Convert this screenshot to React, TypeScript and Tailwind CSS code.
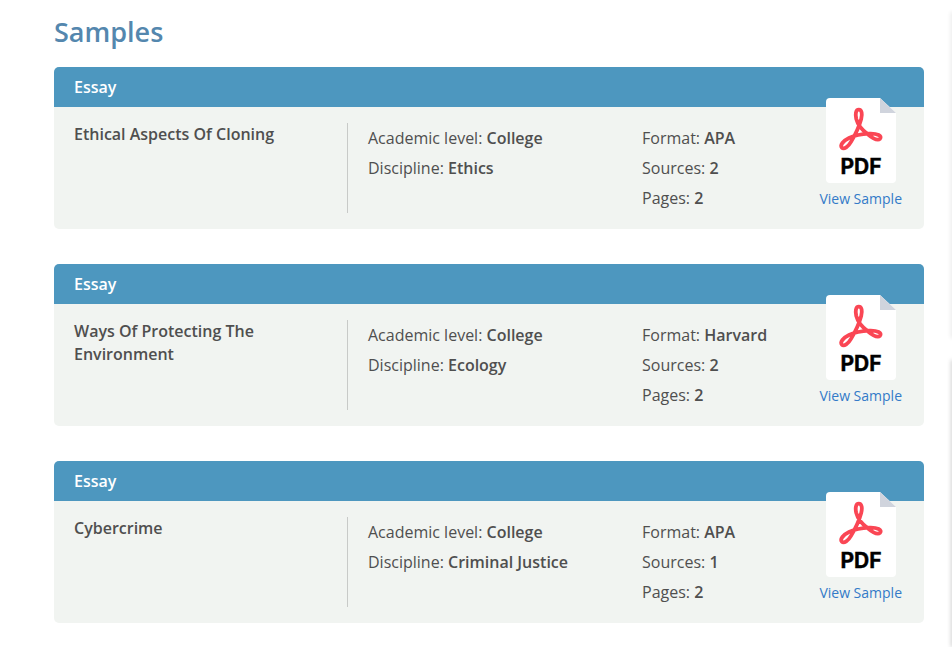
type Sample = {
  title: string
  level: string
  discipline: string
  format: string
  sources: number
  pages: number
}

const SAMPLES: Sample[] = [
  {
    title: 'Ethical Aspects Of Cloning',
    level: 'College',
    discipline: 'Ethics',
    format: 'APA',
    sources: 2,
    pages: 2,
  },
  {
    title: 'Ways Of Protecting The Environment',
    level: 'College',
    discipline: 'Ecology',
    format: 'Harvard',
    sources: 2,
    pages: 2,
  },
  {
    title: 'Cybercrime',
    level: 'College',
    discipline: 'Criminal Justice',
    format: 'APA',
    sources: 1,
    pages: 2,
  },
]

function PdfIcon() {
  return (
    <svg viewBox="0 0 70 85" className="h-[85px] w-[70px]" aria-hidden="true">
      <path d="M4 0H54L70 15V81Q70 85 66 85H4Q0 85 0 81V4Q0 0 4 0Z" fill="#fff" />
      <path d="M54 0L70 15H54Z" fill="#d0d4dd" />
      <path
        d="M32.8 11.6C29.6 11.6 29.2 16.4 30.2 20.7C31.8 26.9 36.2 31.9 41.2 35.7C46.2 40 51.5 43 54 40.9C56.5 37.9 51.5 35.2 43 35.6C36 35.9 28.5 37.4 23 40C17 42.9 13.8 47.2 15.8 49.6C18 51.8 22.3 48.7 25 43.9C28.5 37.9 33.2 28.4 35.2 20.9C36.5 15.9 35.8 11.6 32.8 11.6Z"
        fill="none"
        stroke="#fa4654"
        strokeWidth="3.8"
        strokeLinejoin="round"
      />
      <text
        x="35"
        y="76"
        textAnchor="middle"
        fill="#000"
        stroke="#000"
        strokeWidth="0.4"
        className="font-['Inter',sans-serif] text-[21px] font-bold"
      >
        PDF
      </text>
    </svg>
  )
}

function Field({ label, value }: { label: string; value: string | number }) {
  return (
    <div>
      <dt className="inline">{label}: </dt>
      <dd className="inline font-semibold">{value}</dd>
    </div>
  )
}

function SampleCard({ sample }: { sample: Sample }) {
  return (
    <article className="rounded-[5px] bg-[#f1f4f1]">
      <header className="rounded-t-[5px] bg-[#4d97bf] px-5 py-2 font-semibold leading-6 text-white">
        Essay
      </header>
      <div className="relative flex py-4">
        <h2 className="w-[294px] shrink-0 border-r border-[#c8cac8] pr-16 pl-5 font-semibold leading-[23px]">
          {sample.title}
        </h2>
        <dl className="w-[274px] shrink-0 pl-5 leading-[30px]">
          <Field label="Academic level" value={sample.level} />
          <Field label="Discipline" value={sample.discipline} />
        </dl>
        <dl className="min-w-0 flex-1 pl-5 leading-[30px]">
          <Field label="Format" value={sample.format} />
          <Field label="Sources" value={sample.sources} />
          <Field label="Pages" value={sample.pages} />
        </dl>
        <a
          href="#sample"
          className="absolute -top-[9px] right-[22px] flex flex-col items-center gap-1 text-sm leading-6 text-[#337ac8]"
        >
          <PdfIcon />
          View Sample
        </a>
      </div>
    </article>
  )
}

export default function App() {
  return (
    <div className="flex overflow-hidden bg-white font-['Open_Sans',sans-serif] text-base text-[#4f4f4f]">
      <main className="min-w-0 flex-1 pt-3 pr-7 pb-6 pl-[54px]">
        <h1 className="text-[27px] font-semibold leading-10 text-[#5487ae]">Samples</h1>
        <div className="mt-[15px] flex flex-col gap-[35px]">
          {SAMPLES.map((sample) => (
            <SampleCard key={sample.title} sample={sample} />
          ))}
        </div>
      </main>
      <aside className="-mr-px flex w-px shrink-0 flex-col gap-[22px] pt-3">
        <div className="h-[326px] shadow-[0_0_4px_rgb(0_0_0/0.3)]" />
        <div className="flex-1 shadow-[0_0_4px_rgb(0_0_0/0.6)]" />
      </aside>
    </div>
  )
}
